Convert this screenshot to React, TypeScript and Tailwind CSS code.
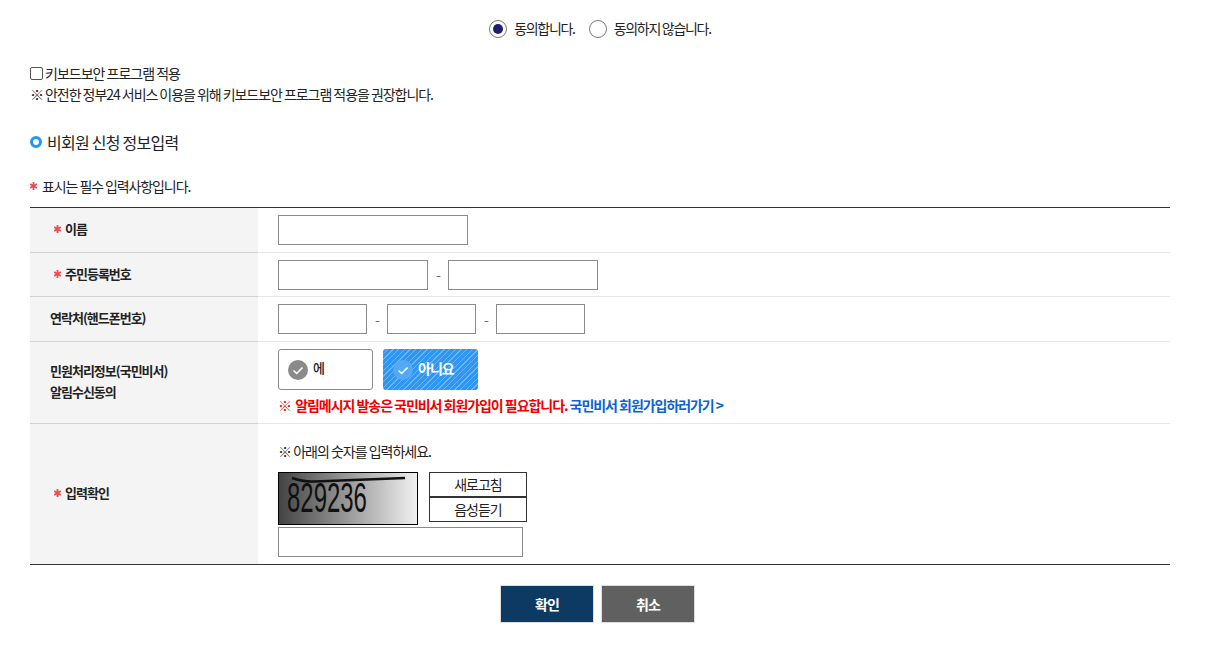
import React from 'react';

const Star = ({ gap }: { gap: string }) => (
    <svg width="7" height="8" viewBox="0 0 7 8" className={`shrink-0 ${gap}`}>
        <path d="M3.5 0 V8 M0.2 2 L6.8 6 M0.2 6 L6.8 2" stroke="#ee4a55" strokeWidth="1.8" />
    </svg>
);

const CheckCircle = ({ bg }: { bg: string }) => (
    <svg width="20" height="20" viewBox="0 0 20 20" className="shrink-0">
        <circle cx="10" cy="10" r="10" fill={bg} />
        <path d="M5.5 10.5 L8.7 13.5 L14.5 7.5" fill="none" stroke="#fff" strokeWidth="1.6" />
    </svg>
);

const Field = ({ w }: { w: string }) => <div className={`${w} h-[30px] border border-[#8a8a8a] bg-white`}></div>;

const Dash = () => <span className="text-[#666] text-[14px] w-[20px] text-center">-</span>;

const App: React.FC = () => {
    return (
        <div className="w-[1200px] h-[656px] overflow-hidden bg-white px-[30px] text-[#222] text-[14px] tracking-[-1px] font-['Noto_Sans_CJK_KR','Noto_Sans',sans-serif]">
            {/* agree radios */}
            <div className="flex justify-center items-center h-[20px] mt-[19px] tracking-[-1.3px]">
                <span className="w-[18px] h-[18px] rounded-full border border-[#777] flex items-center justify-center mr-[7px]">
                    <span className="w-[10px] h-[10px] rounded-full bg-[#1a1f71]"></span>
                </span>
                <span className="mr-[14px] -mt-[2px]">동의합니다.</span>
                <span className="w-[18px] h-[18px] rounded-full border border-[#777] mr-[7px]"></span>
                <span className="-mt-[2px]">동의하지 않습니다.</span>
            </div>

            {/* keyboard security */}
            <div className="flex items-center h-[20px] mt-[24px]">
                <span className="w-[13px] h-[13px] rounded-[2px] border border-[#555] mr-[2px]"></span>
                <span>키보드보안 프로그램 적용</span>
            </div>
            <div className="h-[20px] mt-[1px] leading-[20px] tracking-[-1.05px]">※ 안전한 정부24 서비스 이용을 위해 키보드보안 프로그램 적용을 권장합니다.</div>

            <div className="flex items-center h-[24px] mt-[26px] text-[16px] tracking-[-0.75px]">
                <span className="w-[12px] h-[12px] rounded-full border-[3px] border-[#2196f3] mr-[5px]"></span>
                <span>비회원 신청 정보입력</span>
            </div>

            <div className="flex items-center h-[20px] mt-[22px] tracking-[-1.1px]">
                <Star gap="mr-[5px]" />
                <span>표시는 필수 입력사항입니다.</span>
            </div>

            {/* form table */}
            <div className="mt-[11px] border-t border-b border-[#333] grid grid-cols-[228px_1fr]">
                <div className="h-[45px] bg-[#f4f4f4] border-b border-[#d2d2d2] flex items-center pl-[24px] pb-[2px] font-bold text-[13px]">
                    <Star gap="mr-[4px]" />이름
                </div>
                <div className="h-[45px] border-b border-[#e8e8e8] flex items-center pl-[20px]">
                    <Field w="w-[190px]" />
                </div>

                <div className="h-[44px] bg-[#f4f4f4] border-b border-[#d2d2d2] flex items-center pl-[24px] pb-[2px] font-bold text-[13px]">
                    <Star gap="mr-[4px]" />주민등록번호
                </div>
                <div className="h-[44px] border-b border-[#e8e8e8] flex items-center pl-[20px]">
                    <Field w="w-[150px]" />
                    <Dash />
                    <Field w="w-[150px]" />
                </div>

                <div className="h-[45px] bg-[#f4f4f4] border-b border-[#d2d2d2] flex items-center pl-[20px] pb-[2px] font-bold text-[13px]">
                    연락처(핸드폰번호)
                </div>
                <div className="h-[45px] border-b border-[#e8e8e8] flex items-center pl-[20px]">
                    <Field w="w-[89px]" />
                    <Dash />
                    <Field w="w-[89px]" />
                    <Dash />
                    <Field w="w-[89px]" />
                </div>

                <div className="h-[82px] bg-[#f4f4f4] border-b border-[#d2d2d2] flex items-center pl-[20px] pb-[4px] font-bold text-[13px] leading-[21px]">
                    <div>민원처리정보(국민비서)<br />알림수신동의</div>
                </div>
                <div className="h-[82px] border-b border-[#e8e8e8] pl-[20px] pt-[7px]">
                    <div className="flex gap-[10px] text-[13px]">
                        <div className="w-[95px] h-[41px] border border-[#8a8a8a] rounded-[3px] flex items-center pl-[9px] gap-[5px] font-medium">
                            <CheckCircle bg="#8a8a8a" />
                            <span className="-mt-[3px]">에</span>
                        </div>
                        <div className="w-[95px] h-[41px] rounded-[3px] flex items-center pl-[10px] gap-[5px] text-white text-[14px] font-bold bg-[#2f96f3] bg-[repeating-linear-gradient(135deg,#2f96f3_0px,#2f96f3_3px,#6bb6f7_3px,#6bb6f7_4px)]">
                            <CheckCircle bg="#53a9f5" />
                            <span className="-mt-[3px]">아니요</span>
                        </div>
                    </div>
                    <div className="mt-[5px] h-[20px] leading-[20px] font-bold whitespace-nowrap tracking-[-1.05px]">
                        <span className="text-[#f00000]">※&nbsp; 알림메시지 발송은 국민비서 회원가입이 필요합니다.</span>
                        <span className="text-[#0b62d6]"> 국민비서 회원가입하러가기 &gt;</span>
                    </div>
                </div>

                <div className="h-[140px] bg-[#f4f4f4] flex items-center pl-[24px] pb-[2px] font-bold text-[13px]">
                    <Star gap="mr-[4px]" />입력확인
                </div>
                <div className="h-[140px] pl-[20px] pt-[17px]">
                    <div className="h-[20px] leading-[20px]">※ 아래의 숫자를 입력하세요.</div>
                    <div className="flex items-start mt-[11px]">
                        <div className="relative w-[140px] h-[53px] border border-black overflow-hidden bg-[linear-gradient(90deg,#444444,#f0f0f0)]">
                            <span className="absolute left-[8px] top-0 text-[42px] leading-[50px] tracking-normal text-[#111] font-['Liberation_Sans',sans-serif] scale-x-[0.57] origin-left">829236</span>
                            <svg width="140" height="53" className="absolute inset-0">
                                <path d="M13 5 Q24 9 36 8.5 L126 5" fill="none" stroke="#111" strokeWidth="2.5" />
                            </svg>
                        </div>
                        <div className="ml-[11px] w-[98px]">
                            <div className="h-[25px] border border-[#333] flex items-center justify-center">새로고침</div>
                            <div className="h-[25px] border border-[#333] flex items-center justify-center">음성듣기</div>
                        </div>
                    </div>
                    <div className="w-[245px] h-[30px] mt-[2px] border border-[#8a8a8a]"></div>
                </div>
            </div>

            {/* buttons */}
            <div className="flex justify-center gap-[7px] mt-[20px] pr-[5px] font-bold text-[14px]">
                <button className="w-[94px] h-[38px] bg-[#0d3a63] border border-[#ddd] text-white">확인</button>
                <button className="w-[94px] h-[38px] bg-[#606060] border border-[#ddd] text-white">취소</button>
            </div>
        </div>
    );
};

export default App;
